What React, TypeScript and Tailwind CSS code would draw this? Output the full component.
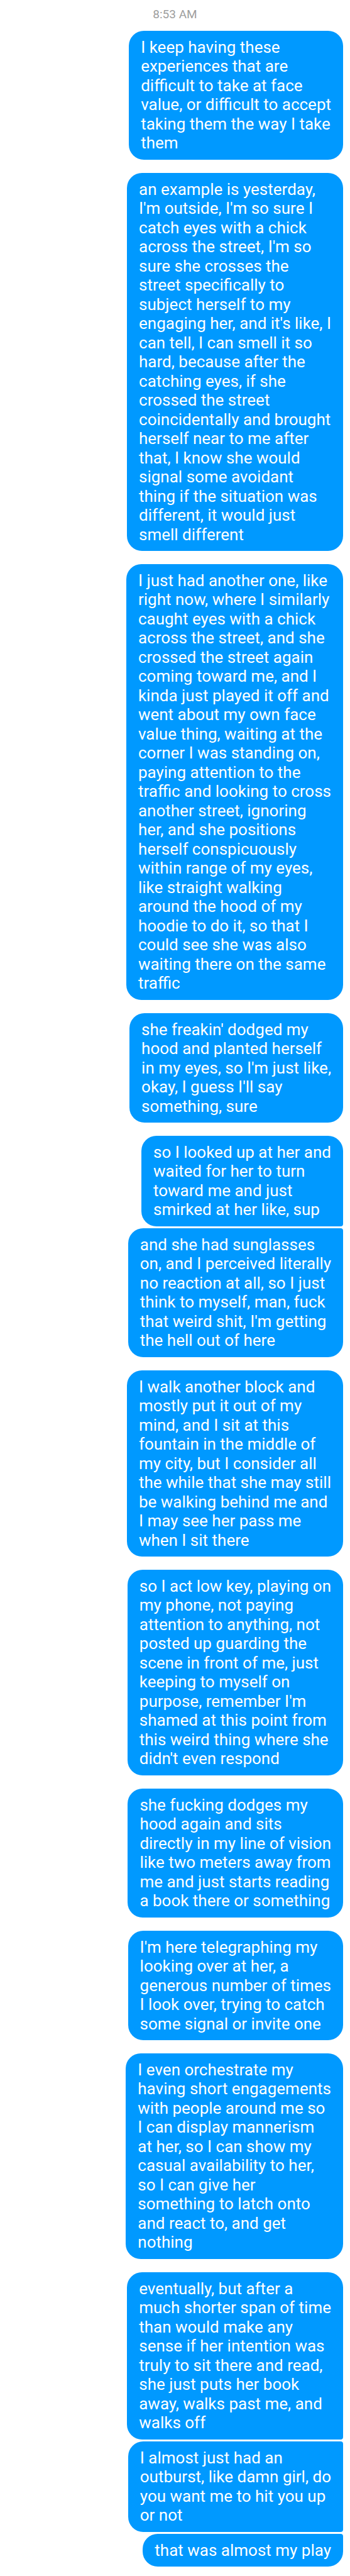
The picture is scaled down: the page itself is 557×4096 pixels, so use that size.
import clsx from "clsx";

type Message = {
  lines: string[];
  joinsPrevious?: boolean;
  joinsNext?: boolean;
};

const messages: Message[] = [
  {
    lines: [
      "I keep having these",
      "experiences that are",
      "difficult to take at face",
      "value, or difficult to accept",
      "taking them the way I take",
      "them",
    ],
  },
  {
    lines: [
      "an example is yesterday,",
      "I'm outside, I'm so sure I",
      "catch eyes with a chick",
      "across the street, I'm so",
      "sure she crosses the",
      "street specifically to",
      "subject herself to my",
      "engaging her, and it's like, I",
      "can tell, I can smell it so",
      "hard, because after the",
      "catching eyes, if she",
      "crossed the street",
      "coincidentally and brought",
      "herself near to me after",
      "that, I know she would",
      "signal some avoidant",
      "thing if the situation was",
      "different, it would just",
      "smell different",
    ],
  },
  {
    lines: [
      "I just had another one, like",
      "right now, where I similarly",
      "caught eyes with a chick",
      "across the street, and she",
      "crossed the street again",
      "coming toward me, and I",
      "kinda just played it off and",
      "went about my own face",
      "value thing, waiting at the",
      "corner I was standing on,",
      "paying attention to the",
      "traffic and looking to cross",
      "another street, ignoring",
      "her, and she positions",
      "herself conspicuously",
      "within range of my eyes,",
      "like straight walking",
      "around the hood of my",
      "hoodie to do it, so that I",
      "could see she was also",
      "waiting there on the same",
      "traffic",
    ],
  },
  {
    lines: [
      "she freakin' dodged my",
      "hood and planted herself",
      "in my eyes, so I'm just like,",
      "okay, I guess I'll say",
      "something, sure",
    ],
  },
  {
    lines: [
      "so I looked up at her and",
      "waited for her to turn",
      "toward me and just",
      "smirked at her like, sup",
    ],
    joinsNext: true,
  },
  {
    lines: [
      "and she had sunglasses",
      "on, and I perceived literally",
      "no reaction at all, so I just",
      "think to myself, man, fuck",
      "that weird shit, I'm getting",
      "the hell out of here",
    ],
    joinsPrevious: true,
  },
  {
    lines: [
      "I walk another block and",
      "mostly put it out of my",
      "mind, and I sit at this",
      "fountain in the middle of",
      "my city, but I consider all",
      "the while that she may still",
      "be walking behind me and",
      "I may see her pass me",
      "when I sit there",
    ],
  },
  {
    lines: [
      "so I act low key, playing on",
      "my phone, not paying",
      "attention to anything, not",
      "posted up guarding the",
      "scene in front of me, just",
      "keeping to myself on",
      "purpose, remember I'm",
      "shamed at this point from",
      "this weird thing where she",
      "didn't even respond",
    ],
  },
  {
    lines: [
      "she fucking dodges my",
      "hood again and sits",
      "directly in my line of vision",
      "like two meters away from",
      "me and just starts reading",
      "a book there or something",
    ],
  },
  {
    lines: [
      "I'm here telegraphing my",
      "looking over at her, a",
      "generous number of times",
      "I look over, trying to catch",
      "some signal or invite one",
    ],
  },
  {
    lines: [
      "I even orchestrate my",
      "having short engagements",
      "with people around me so",
      "I can display mannerism",
      "at her, so I can show my",
      "casual availability to her,",
      "so I can give her",
      "something to latch onto",
      "and react to, and get",
      "nothing",
    ],
  },
  {
    lines: [
      "eventually, but after a",
      "much shorter span of time",
      "than would make any",
      "sense if her intention was",
      "truly to sit there and read,",
      "she just puts her book",
      "away, walks past me, and",
      "walks off",
    ],
    joinsNext: true,
  },
  {
    lines: [
      "I almost just had an",
      "outburst, like damn girl, do",
      "you want me to hit you up",
      "or not",
    ],
    joinsPrevious: true,
    joinsNext: true,
  },
  { lines: ["that was almost my play"], joinsPrevious: true },
];

function Bubble({ lines, joinsPrevious, joinsNext }: Message) {
  return (
    <li
      className={clsx(
        "rounded-l-[24px] bg-[#0099ff] px-[19px] py-[11px] text-[26px] leading-[30px] whitespace-nowrap text-white last:mb-0",
        joinsPrevious ? "rounded-tr-[4px]" : "rounded-tr-[24px]",
        joinsNext ? "mb-[3px] rounded-br-[4px]" : "mb-[21px] rounded-br-[24px]",
      )}
    >
      <p className="grid auto-rows-[30px_31px]">
        {lines.map((line, index) => (
          <span key={index}>{line} </span>
        ))}
      </p>
    </li>
  );
}

export default function App() {
  return (
    <main className="min-h-screen bg-white pt-3 font-[Roboto,sans-serif]">
      <time className="block h-[37px] text-center text-[19px] leading-[22px] text-[#9e9e9e]">
        8:53 AM
      </time>
      <ol className="flex flex-col items-end pr-[11px]">
        {messages.map((message, index) => (
          <Bubble key={index} {...message} />
        ))}
      </ol>
    </main>
  );
}
